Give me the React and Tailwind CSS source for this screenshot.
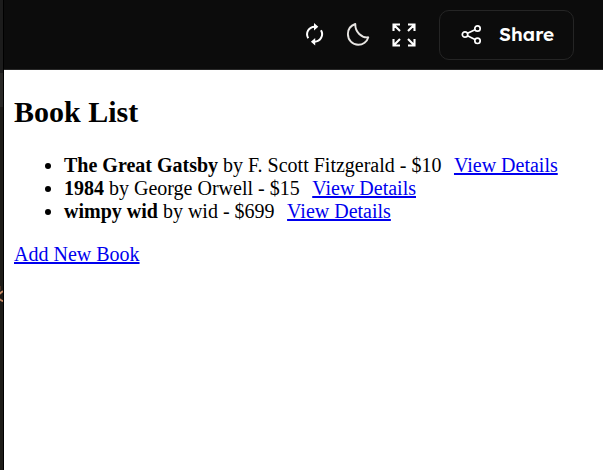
import React from "react";

const books = [
  { title: "The Great Gatsby", author: "F. Scott Fitzgerald", price: 10 },
  { title: "1984", author: "George Orwell", price: 15 },
  { title: "wimpy wid", author: "wid", price: 699 },
];

function RefreshIcon() {
  return (
    <svg width="20" height="24" viewBox="0 0 20 24" fill="none" stroke="#fff" strokeWidth="2">
      <path d="M3.200 16.200A7.600 7.600 0 0 1 9.600 4.700" />
      <path d="M16 8.200A7.600 7.600 0 0 1 9.600 19.700" />
      <path d="M9 .9 13.300 4.700 9 8.500ZM10.200 15.900 5.900 19.700 10.200 23.500Z" fill="#fff" stroke="none" />
    </svg>
  );
}

function MoonIcon() {
  return (
    <svg width="24" height="24" viewBox="0 0 24 24" fill="none" stroke="#e8e6e3" strokeWidth="1.900" strokeLinejoin="round">
      <path d="M9.300 2C4.900 3.500 1.900 7.200 1.900 12c0 6 4.500 10.800 10.300 10.800 4.700 0 8.900-3 10.100-7.500C15.700 16.300 9 10 9.300 2Z" />
    </svg>
  );
}

function ExpandIcon() {
  return (
    <svg width="24" height="24" viewBox="0 0 24 24" fill="none" stroke="#fff" strokeWidth="2.100">
      <path d="M1.500 8V1.500H8M1.500 1.500 8 8M16 1.500h6.500V8M22.500 1.500 16 8M1.500 16v6.500H8M1.500 22.500 8 16M16 22.500h6.500V16M22.500 22.500 16 16" />
    </svg>
  );
}

function ShareIcon() {
  return (
    <svg width="22" height="22" viewBox="0 0 22 22" fill="none" stroke="#fff" strokeWidth="1.700">
      <circle cx="5" cy="10.500" r="2.700" />
      <circle cx="17.500" cy="4.500" r="2.700" />
      <circle cx="17.500" cy="16.800" r="2.700" />
      <path d="m7.500 9.300 7.500-3.600M7.500 11.700l7.500 3.800" />
    </svg>
  );
}

function Toolbar() {
  return (
    <header className="flex h-[70px] items-start border-b border-[#292929] bg-[#0c0c0c] pl-[301px]">
      <button className="mt-[22px]" aria-label="Refresh"><RefreshIcon /></button>
      <button className="mt-[22px] ml-[21px]" aria-label="Dark mode"><MoonIcon /></button>
      <button className="mt-[23px] ml-[22px]" aria-label="Full screen"><ExpandIcon /></button>
      <button className="mt-[10px] ml-[23px] flex h-[50px] w-[135px] items-center rounded-[10px] border border-[#252525] pl-[20px] text-white">
        <ShareIcon />
        <span className="mb-[2px] ml-[17px] font-[Lexend,Lato,sans-serif] text-[19px] leading-[24px] font-semibold">Share</span>
      </button>
    </header>
  );
}

export default function App() {
  return (
    <div className="flex h-[470px] w-[603px] overflow-hidden bg-white">
      <aside className="w-[4px] shrink-0 overflow-hidden border-r border-black bg-[#1e1c18]">
        <div className="h-[73px] bg-[#1c1c1c]" />
        <div className="h-[34px] bg-[#2a2927]" />
        <svg className="mt-[179px] block" width="3" height="18" viewBox="0 0 3 18" fill="none">
          <path d="M0 0h1v4H0z" fill="#493225" />
          <path d="M3 5.500C1.200 5.500 1 6.500 0 8M0 13c1 1.500 1.500 2 3 2" stroke="#c98b66" strokeWidth="1.800" />
        </svg>
      </aside>
      <div className="min-w-0 flex-1">
        <Toolbar />
        <main className="px-[10px] pt-[24px] font-['Liberation_Serif','Times_New_Roman',serif] text-[20px] leading-[23px] text-black">
          <h2 className="mb-[25px] text-[30px] leading-[35px] font-bold">Book List</h2>
          <ul className="mb-[20px] list-disc pl-[50px]">
            {books.map((book) => (
              <li key={book.title}>
                <strong>{book.title}</strong> by {book.author} - ${book.price}
                <a href="#" className="ml-[12.5px] text-[#0000ee] underline decoration-2">View Details</a>
              </li>
            ))}
          </ul>
          <a href="#" className="text-[#0000ee] underline decoration-2">Add New Book</a>
        </main>
      </div>
    </div>
  );
}
